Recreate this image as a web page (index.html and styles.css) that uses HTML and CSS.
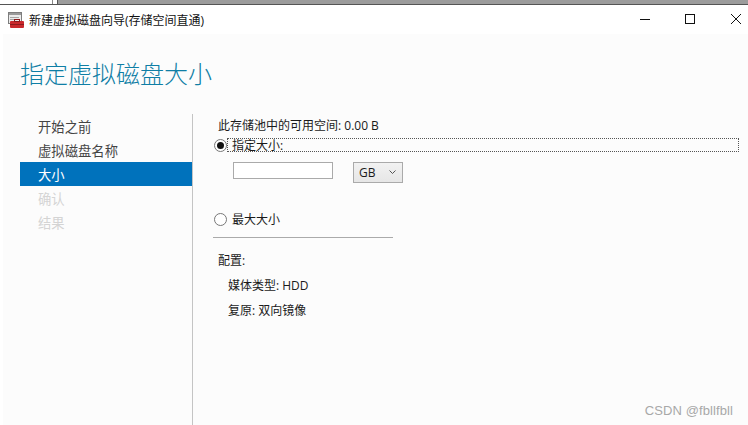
FILE: index.html
```html
<!DOCTYPE html>
<html lang="zh-CN">
<head>
<meta charset="utf-8">
<title>新建虚拟磁盘向导</title>
<link rel="stylesheet" href="styles.css">
</head>
<body>
<div class="strip"><div class="strip-left"></div><div class="strip-gray"></div></div>
<header class="titlebar">
  <svg class="app-icon" width="16" height="16" viewBox="0 0 16 16">
    <rect x="0.5" y="0.5" width="13" height="11" fill="#ececec" stroke="#7d7d7d"/>
    <rect x="1" y="1" width="12" height="2" fill="#9a9a9a"/>
    <path d="M2 5.5h9M2 7.5h4" stroke="#a5a5a5"/>
    <rect x="2" y="9" width="14" height="7" rx="1" fill="#c9282c"/>
    <rect x="6.5" y="7.5" width="5" height="2" fill="none" stroke="#8e1a1c"/>
    <path d="M2 12.5h14" stroke="#8e1a1c"/>
  </svg>
  <span class="title-text">新建虚拟磁盘向导(存储空间直通)</span>
  <div class="controls">
    <svg width="12" height="12" viewBox="0 0 12 12"><path d="M2 6.5h10" stroke="#111"/></svg>
    <svg width="12" height="12" viewBox="0 0 12 12"><rect x="1.5" y="1.5" width="9" height="9" fill="none" stroke="#111"/></svg>
    <svg width="12" height="12" viewBox="0 0 12 12"><path d="M1 1l10 10M11 1L1 11" stroke="#111"/></svg>
  </div>
</header>
<main class="wizard">
  <h1 class="heading">指定虚拟磁盘大小</h1>
  <div class="body">
    <nav class="steps">
      <div class="step">开始之前</div>
      <div class="step">虚拟磁盘名称</div>
      <div class="step active">大小</div>
      <div class="step disabled">确认</div>
      <div class="step disabled">结果</div>
    </nav>
    <section class="panel">
      <p class="free">此存储池中的可用空间: 0.00 B</p>
      <label class="radio-row focused">
        <span class="radio checked"></span>
        <span class="radio-label">指定大小:</span>
      </label>
      <div class="size-row">
        <span class="size-input"></span>
        <span class="unit">GB
          <svg width="7" height="5" viewBox="0 0 7 5"><path d="M0.5 0.5L3.5 3.5L6.5 0.5" fill="none" stroke="#555"/></svg>
        </span>
      </div>
      <label class="radio-row max-row">
        <span class="radio"></span>
        <span class="radio-label">最大大小</span>
      </label>
      <div class="rule"></div>
      <p class="config-title">配置:</p>
      <p class="config-item">媒体类型: HDD</p>
      <p class="config-item">复原: 双向镜像</p>
    </section>
  </div>
</main>
<div class="watermark">CSDN @fbllfbll</div>
</body>
</html>
```

FILE: styles.css
```css
* { box-sizing: border-box; }
html, body { margin: 0; height: 100%; }
body {
  width: 748px;
  height: 425px;
  overflow: hidden;
  position: relative;
  display: flex;
  flex-direction: column;
  background: #fff;
  font-family: "Open Sans", "Noto Sans CJK SC", sans-serif;
  font-size: 12px;
  color: #1a1a1a;
}
.strip {
  height: 5px;
  display: flex;
  flex: none;
  border-bottom: 1px solid #555;
}
.strip-left {
  width: 53px;
  border-right: 1px solid #888;
}
.strip-gray {
  flex: 1;
  margin-left: 4px;
  background: #9c9c9c;
  border-left: 1px solid #555;
}
.titlebar {
  height: 29px;
  flex: none;
  display: flex;
  align-items: center;
  padding-left: 8px;
}
.app-icon { flex: none; margin-top: 1px; }
.title-text {
  margin: 2px 0 0 5px;
  font-size: 12px;
  line-height: 16px;
  color: #111;
  white-space: nowrap;
}
.controls {
  margin-left: auto;
  display: flex;
  gap: 34px;
  padding-right: 6px;
  margin-top: -2px;
}
.controls svg { display: block; }
.wizard {
  flex: 1;
  margin-left: 3px;
  background: #fcfcfc;
  display: flex;
  flex-direction: column;
  min-height: 0;
}
.heading {
  margin: 23px 0 0 17px;
  font-size: 24px;
  line-height: 34px;
  font-weight: 300;
  color: #0f7ea5;
  white-space: nowrap;
}
.body {
  flex: 1;
  display: flex;
  margin-top: 23px;
  min-height: 0;
}
.steps {
  width: 173px;
  flex: none;
  margin-left: 17px;
  font-size: 13.33px;
}
.step {
  height: 24px;
  line-height: 27px;
  padding-left: 18px;
  color: #444;
}
.step.active {
  background: #0072bc;
  color: #fff;
}
.step.disabled { color: #d4d4d4; }
.panel {
  flex: 1;
  border-left: 1px solid #c4c4c4;
  padding-left: 21px;
  margin-left: -1px;
  padding-right: 9px;
  min-width: 0;
}
.free {
  margin: 4px 0 0 4px;
  line-height: 16px;
  color: #1a1a1a;
}
.radio-row {
  display: flex;
  align-items: center;
  height: 14px;
  margin-top: 4px;
}
.radio {
  width: 13px;
  height: 13px;
  border: 1px solid #777;
  border-radius: 50%;
  background: #fff;
  flex: none;
  display: flex;
  align-items: center;
  justify-content: center;
}
.radio.checked::after {
  content: "";
  width: 7px;
  height: 7px;
  border-radius: 50%;
  background: #111;
}
.radio-label {
  margin-left: 5px;
  line-height: 15px;
  color: #1a1a1a;
}
.focused .radio-label {
  flex: 1;
  border: 1px dotted #555;
  height: 14px;
  line-height: 14px;
  margin-left: 0;
  padding-left: 4px;
}
.size-row {
  display: flex;
  align-items: flex-start;
  margin: 10px 0 0 19px;
  gap: 20px;
}
.size-input {
  display: block;
  width: 100px;
  height: 17px;
  background: #fff;
  border: 1px solid #aaa;
}
.unit {
  width: 50px;
  height: 21px;
  background: linear-gradient(#f2f2f2, #e6e6e6);
  border: 1px solid #aaa;
  display: flex;
  align-items: center;
  justify-content: space-between;
  padding: 0 6px 0 5px;
  font-size: 12px;
  color: #1a1a1a;
}
.max-row {
  margin-top: 29px;
  height: 15px;
}
.rule {
  width: 180px;
  margin: 10px 0 0 -1px;
  border-top: 1px solid #aaa;
}
.config-title {
  margin: 14px 0 0 4px;
  line-height: 18px;
}
.config-item {
  margin: 7px 0 0 14px;
  line-height: 18px;
}
.watermark {
  position: absolute;
  right: 15px;
  bottom: 7px;
  font-family: "Liberation Sans", sans-serif;
  font-size: 13px;
  color: #a8a8a8;
  letter-spacing: 0.1px;
}
```
